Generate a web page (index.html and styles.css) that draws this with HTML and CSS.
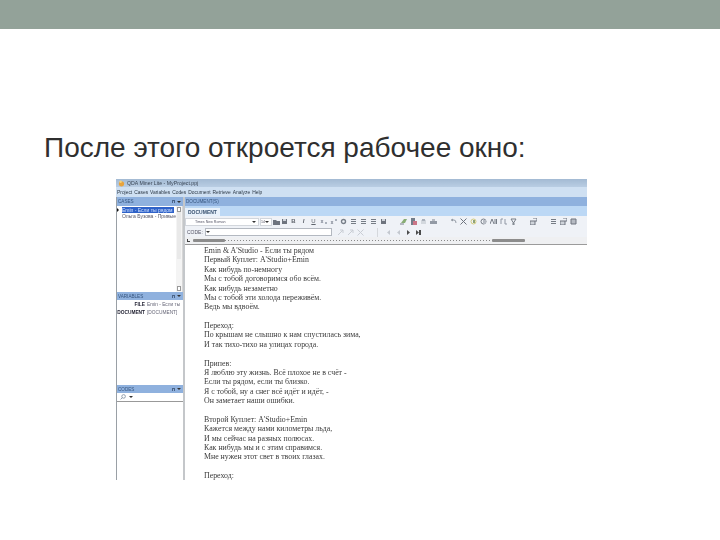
FILE: index.html
```html
<!doctype html>
<html lang="ru">
<head>
  <meta charset="UTF-8">
  <title>После этого откроется рабочее окно</title>
  <link rel="stylesheet" href="styles.css">
</head>
<body>
  <svg class="defs" width="0" height="0">
    <symbol id="i-folder" viewBox="0 0 7 7"><path d="M0 2h3l1 1h3v4H0z" fill="#4e5560"/></symbol>
    <symbol id="i-save" viewBox="0 0 7 7"><path d="M1 1h5v5H1z" fill="#4e5560"/><path d="M2 1h3v2H2z" fill="#c7ccd3"/></symbol>
    <symbol id="i-lines" viewBox="0 0 7 7"><path d="M1 1.5h5M1 3.5h5M1 5.5h5" stroke="#59606b"/></symbol>
    <symbol id="i-small" viewBox="0 0 7 7"><path d="M1 2 3 5M3 2 1 5" stroke="#7b8290"/><path d="M5 4h2v2H5z" fill="#9aa2ad"/></symbol>
    <symbol id="i-sup" viewBox="0 0 7 7"><path d="M1 3 3 6M3 3 1 6" stroke="#7b8290"/><path d="M5 1h2v2H5z" fill="#9aa2ad"/></symbol>
    <symbol id="i-dot" viewBox="0 0 7 7"><circle cx="3.5" cy="3.5" r="2" fill="none" stroke="#5b636e" stroke-width="1.4"/></symbol>
    <symbol id="i-leaf" viewBox="0 0 7 7"><path d="M1 5 4 1h3L5 5z" fill="#6f9c55"/><path d="M0 6h4" stroke="#5b636e"/></symbol>
    <symbol id="i-doc" viewBox="0 0 7 7"><path d="M1 0h4v7H1z" fill="#54606f"/><path d="M3 3h4v4H3z" fill="#c2566c"/></symbol>
    <symbol id="i-disk" viewBox="0 0 7 7"><path d="M1 2h5v4H1z" fill="#cdd2d8"/><path d="M2 1h3v2H2z" fill="#9aa2ad"/></symbol>
    <symbol id="i-print" viewBox="0 0 7 7"><path d="M2 1h3v2H2z" fill="#a8aeb7"/><path d="M0 3h7v3H0z" fill="#7d8591"/></symbol>
    <symbol id="i-undo" viewBox="0 0 7 7"><path d="M1 2h3q2 0 2 3" fill="none" stroke="#7d8591"/><path d="M1 2l2-1.500v3z" fill="#7d8591"/></symbol>
    <symbol id="i-cut" viewBox="0 0 7 7"><path d="M.5.500 6.500 6.500M6.500.500.5 6.500" stroke="#4e5560"/></symbol>
    <symbol id="i-cutpale" viewBox="0 0 7 7"><path d="M.5.500 6.500 6.500M6.500.500.5 6.500" stroke="#c0c5cc"/></symbol>
    <symbol id="i-copy" viewBox="0 0 7 7"><circle cx="3.500" cy="3.500" r="2.500" fill="none" stroke="#c9bf5c"/><path d="M3 2h2v3H3z" fill="#77905a"/></symbol>
    <symbol id="i-find" viewBox="0 0 7 7"><circle cx="3.500" cy="3.500" r="2.500" fill="none" stroke="#59606b"/><path d="M3 2h3v4H3z" fill="#a8aeb7"/></symbol>
    <symbol id="i-aa" viewBox="0 0 7 7"><path d="M0 6 2 1l2 5M5 1v5M6.500 1v5" fill="none" stroke="#59606b"/></symbol>
    <symbol id="i-fl" viewBox="0 0 7 7"><path d="M1 6V1h2M5 1v5h2" fill="none" stroke="#7b8290"/></symbol>
    <symbol id="i-arrow" viewBox="0 0 7 7"><path d="M1 1h5L3.500 5zM3 5v2h1V5z" fill="none" stroke="#59606b"/></symbol>
    <symbol id="i-win" viewBox="0 0 7 7"><path d="M0 3h5v4H0z" fill="#c7ccd3" stroke="#4e5560"/><path d="M3 0h4v3H5" fill="none" stroke="#4e5560"/></symbol>
    <symbol id="i-box" viewBox="0 0 7 7"><path d="M1 1h5v5H1z" fill="#a8aeb7" stroke="#4e5560"/></symbol>
    <symbol id="i-play" viewBox="0 0 7 7"><path d="M2 1l3 2.500L2 6z" fill="#222"/></symbol>
    <symbol id="i-end" viewBox="0 0 7 7"><path d="M1 1l3 2.500L1 6z" fill="#222"/><path d="M4 1h2v5H4z" fill="#222"/></symbol>
    <symbol id="i-back" viewBox="0 0 7 7"><path d="M5 1 2 3.500 5 6z" fill="#b9bec6"/></symbol>
    <symbol id="i-pale" viewBox="0 0 7 7"><path d="M1 6 6 1M3 1h3v3" fill="none" stroke="#c0c5cc"/></symbol>
  </svg>

  <div class="topbar"></div>
  <h1 class="heading">После этого откроется рабочее окно:</h1>

  <div class="shot">
    <div class="titlebar">
      <svg class="appicon" width="7" height="7" viewBox="0 0 8 8"><circle cx="4" cy="4.400" r="3" fill="#e8a33c"/><circle cx="3" cy="2" r="1.400" fill="#f4d27a"/></svg>
      <span>QDA Miner Lite - MyProject.ppj</span>
    </div>
    <div class="menubar">
      <span>Project</span><span>Cases</span><span>Variables</span><span>Codes</span><span>Document</span><span>Retrieve</span><span>Analyze</span><span>Help</span>
    </div>

    <div class="work">
      <!-- левая колонка -->
      <div class="side">
        <div class="panehead"><span>CASES</span><span class="pin"><i></i><i class="drop"></i></span></div>
        <div class="pane-cases">
          <div class="caselist">
            <div class="case case-on"><b class="tri"></b><span>Emin - Если ты рядом</span></div>
            <div class="case"><b></b><span>Ольга Бузова - Привые</span></div>
          </div>
          <div class="scroll"><i class="arrow"></i><i class="thumb"></i><i class="arrow"></i></div>
        </div>
        <div class="panehead panehead-vars"><span>VARIABLES</span><span class="pin"><i></i><i class="drop"></i></span></div>
        <div class="pane-vars">
          <div class="varrow"><b>FILE</b><span>Emin - Если ты</span></div>
          <div class="varrow"><b>DOCUMENT</b><span>[DOCUMENT]</span></div>
        </div>
        <div class="panehead panehead-vars"><span>CODES</span><span class="pin"><i></i><i class="drop"></i></span></div>
        <div class="searchrow">
          <svg width="6" height="6" viewBox="0 0 10 10"><circle cx="6" cy="4" r="3" fill="none" stroke="#8a97a8" stroke-width="1.500"/><path d="M4 6 1 9" stroke="#8a97a8" stroke-width="1.500"/></svg>
          <i class="drop"></i>
        </div>
      </div>

      <div class="split"></div>

      <!-- документ -->
      <div class="main">
        <div class="panehead panehead-main"><span>DOCUMENT(S)</span></div>
        <div class="tabs"><span class="tab">DOCUMENT</span></div>
        <div class="tools">
          <span class="combo combo-font"><em>Times New Roman</em><i class="drop"></i></span>
          <span class="combo combo-size"><em>14</em><i class="drop"></i></span>
          <span class="icons icons-a"><svg><use href="#i-folder"/></svg><svg><use href="#i-save"/></svg></span>
          <span class="icons icons-b">
            <span class="letter">B</span><span class="letter letter-i">I</span><span class="letter letter-u">U</span>
            <svg><use href="#i-small"/></svg><svg><use href="#i-sup"/></svg><svg><use href="#i-dot"/></svg>
            <svg><use href="#i-lines"/></svg><svg><use href="#i-lines"/></svg><svg><use href="#i-lines"/></svg><svg><use href="#i-save"/></svg>
          </span>
          <span class="icons icons-c"><svg><use href="#i-leaf"/></svg><svg><use href="#i-doc"/></svg><svg><use href="#i-disk"/></svg><svg><use href="#i-print"/></svg></span>
          <span class="icons icons-d"><svg><use href="#i-undo"/></svg><svg><use href="#i-cut"/></svg><svg><use href="#i-copy"/></svg><svg><use href="#i-find"/></svg><svg><use href="#i-aa"/></svg><svg><use href="#i-fl"/></svg><svg><use href="#i-arrow"/></svg></span>
          <span class="icons icons-e"><svg><use href="#i-win"/></svg></span>
          <span class="icons icons-f"><svg><use href="#i-lines"/></svg><svg><use href="#i-win"/></svg><svg><use href="#i-box"/></svg></span>
        </div>
        <div class="coderow">
          <span class="codelabel">CODE:</span>
          <span class="combo combo-code"><i class="drop"></i></span>
          <span class="icons icons-g"><svg><use href="#i-pale"/></svg><svg><use href="#i-pale"/></svg><svg><use href="#i-cutpale"/></svg></span>
          <span class="sep"></span>
          <span class="icons icons-h"><svg><use href="#i-back"/></svg><svg><use href="#i-back"/></svg><svg><use href="#i-play"/></svg><svg><use href="#i-end"/></svg></span>
        </div>
        <div class="rulerrow">
          <span class="mark"></span>
          <span class="grip"></span>
          <span class="ruler"></span>
          <span class="grip grip-end"></span>
        </div>
        <div class="doc">
          <p>Emin &amp; A'Studio - Если ты рядом</p>
          <p>Первый Куплет: A'Studio+Emin</p>
          <p>Как нибудь по-немногу</p>
          <p>Мы с тобой договоримся обо всём.</p>
          <p>Как нибудь незаметно</p>
          <p>Мы с тобой эти холода переживём.</p>
          <p>Ведь мы вдвоём.</p>
          <p>&nbsp;</p>
          <p>Переход:</p>
          <p>По крышам не слышно к нам спустилась зима,</p>
          <p>И так тихо-тихо на улицах города.</p>
          <p>&nbsp;</p>
          <p>Припев:</p>
          <p>Я люблю эту жизнь. Всё плохое не в счёт -</p>
          <p>Если ты рядом, если ты близко.</p>
          <p>Я с тобой, ну а снег всё идёт и идёт, -</p>
          <p>Он заметает наши ошибки.</p>
          <p>&nbsp;</p>
          <p>Второй Куплет: A'Studio+Emin</p>
          <p>Кажется между нами километры льда,</p>
          <p>И мы сейчас на разных полюсах.</p>
          <p>Как нибудь мы и с этим справимся.</p>
          <p>Мне нужен этот свет в твоих глазах.</p>
          <p>&nbsp;</p>
          <p>Переход:</p>
        </div>
      </div>
    </div>
  </div>
</body>
</html>
```

FILE: styles.css
```css
html,body{margin:0;padding:0;background:#fff;}
body{width:720px;height:540px;overflow:hidden;font-family:"Liberation Sans",Arial,sans-serif;}
p{margin:0;}
em{font-style:normal;}
.defs{display:block;}

.topbar{height:29px;background:#93a299;}
.heading{margin:100px 0 0 44px;height:50px;font-size:28px;line-height:38px;font-weight:normal;color:#2f2f2f;}

/* скриншот программы */
.shot{width:471px;height:301px;margin-left:116px;overflow:hidden;background:#fff;filter:blur(.4px);display:flex;flex-direction:column;}
.titlebar{height:8px;display:flex;align-items:center;gap:2px;padding-left:2px;background:linear-gradient(#a3bad3,#b9cde3);font-size:5.200px;color:#3a4656;flex:none;}
.menubar{height:10px;display:flex;align-items:center;gap:2px;padding-left:1px;background:#cfe0f2;font-size:4.900px;color:#2c3846;flex:none;}
.appicon{flex:none;}

.work{flex:1;display:flex;min-height:0;}
.side{width:66px;display:flex;flex-direction:column;border-left:1px solid #9aa0a6;}
.split{width:2px;background:#c4c7ca;}
.main{flex:1;display:flex;flex-direction:column;min-width:0;}

.panehead{height:9px;flex:none;display:flex;align-items:center;justify-content:space-between;padding:0 2px 0 1px;background:#8fb1de;font-size:4.600px;color:#36557e;}
.panehead-vars{height:8px;}
.panehead-main{padding-left:1px;}
.pin{display:flex;align-items:center;gap:2px;}
.pin i:first-child{width:3px;height:3px;border:1px solid #4a6488;border-bottom:0;box-sizing:border-box;}
.drop{width:0;height:0;border:2px solid transparent;border-bottom:0;border-top-color:#333;flex:none;display:block;}

.pane-cases{flex:none;height:86px;display:flex;}
.caselist{flex:1;min-width:0;overflow:hidden;padding-top:1px;}
.case{display:flex;align-items:center;height:6px;font-size:5px;line-height:6px;color:#556;white-space:nowrap;}
.case b{width:5px;flex:none;}
.case .tri{width:0;height:0;border:2px solid transparent;border-right:0;border-left:2px solid #111;margin-right:3px;}
.case-on span{background:#2f62c8;color:#cfe0ff;padding-right:1px;}
.scroll{width:7px;background:#f4f4f4;display:flex;flex-direction:column;flex:none;border-right:1px solid #d6d6d6;box-sizing:border-box;padding:1px;}
.thumb{flex:none;height:47px;background:#e9e9e9;margin-bottom:auto;}
.arrow{height:5px;background:#fff;border:1px solid #999;box-sizing:border-box;flex:none;}

.pane-vars{flex:none;height:85px;box-sizing:border-box;}
.varrow{display:flex;height:8px;align-items:center;gap:2px;font-size:4.800px;color:#667;white-space:nowrap;overflow:hidden;}
.varrow b{width:28px;flex:none;text-align:right;color:#223;}

.searchrow{height:9px;flex:none;display:flex;align-items:center;border-bottom:1px solid #999;gap:3px;padding-left:3px;box-sizing:border-box;}

.tabs{height:10px;flex:none;background:#bcd8f5;display:flex;align-items:flex-end;}
.tab{height:8px;padding:0 3px;background:#e9f2fb;font-size:5px;font-weight:bold;line-height:8px;color:#37506f;}

.tools,.coderow{flex:none;display:flex;align-items:center;background:#eff2f7;}
.tools{height:11px;}
.coderow{height:10px;padding-left:2px;}
.combo{height:6px;background:#fff;border:1px solid #d2d6dc;display:flex;align-items:center;justify-content:space-between;font-size:3.600px;color:#556;box-sizing:content-box;flex:none;padding-right:2px;}
.combo-font{width:61px;padding-left:9px;}
.combo-size{width:8px;margin-left:1px;}
.combo-code{width:123px;margin-left:1px;border-color:#b3b8c0;}
.codelabel{font-size:5px;color:#556;width:17px;flex:none;}
.sep{width:1px;height:9px;background:#d5d8dc;margin-left:13px;flex:none;}

.icons{display:flex;gap:3px;flex:none;align-items:center;opacity:.8;}
.icons svg{width:7px;height:7px;display:block;flex:none;}
.letter{width:7px;font-size:6px;line-height:7px;font-weight:bold;text-align:center;color:#3c424b;}
.letter-i{font-style:italic;}
.letter-u{font-weight:normal;text-decoration:underline;}
.icons-a{margin-left:1px;gap:1px;}
.icons-b{margin-left:2px;}
.icons-c{margin-left:13px;}
.icons-d{margin-left:13px;}
.icons-e{margin-left:13px;}
.icons-f{margin-left:13px;}
.icons-g{margin-left:5px;}
.icons-h{margin-left:7px;}

.rulerrow{height:8px;flex:none;display:flex;align-items:center;background:#eff0f2;border-bottom:1px solid #9b9b9b;padding-left:2px;box-sizing:border-box;}
.mark{width:3px;height:3px;border-left:1px solid #444;border-bottom:1px solid #444;box-sizing:border-box;flex:none;}
.grip{width:32px;height:3px;background:#8c8c8c;margin-left:3px;flex:none;border-radius:1px;}
.ruler{width:267px;height:1px;flex:none;background:repeating-linear-gradient(90deg,#888 0 1px,transparent 1px 3px);}
.grip-end{margin-left:0;width:33px;}

.doc{flex:1;overflow:hidden;padding:1px 0 0 19px;font-family:"Liberation Serif","Times New Roman",serif;font-size:7.850px;line-height:9.370px;color:#3a3a3a;white-space:nowrap;}
```
